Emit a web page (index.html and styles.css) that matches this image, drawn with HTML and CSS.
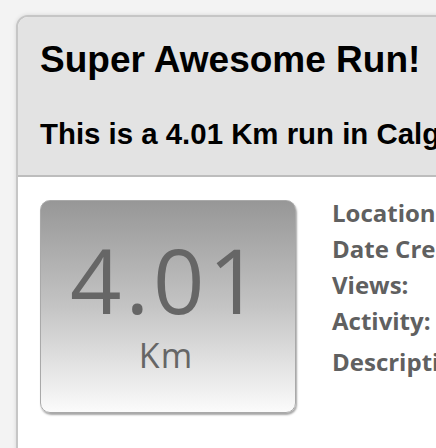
FILE: index.html
```html
<!DOCTYPE html>
<html>
<head>
<meta charset="utf-8">
<link rel="stylesheet" href="styles.css">
</head>
<body>
<div class="card">
  <div class="card-head">
    <h1 class="title">Super Awesome Run!</h1>
    <h2 class="subtitle">This is a 4.01 Km run in Calgary, Alberta</h2>
  </div>
  <div class="card-body">
    <div class="stat">
      <div class="stat-value">4.01</div>
      <div class="stat-unit">Km</div>
    </div>
    <dl class="details">
      <dt class="label">Location:</dt>
      <dt class="label">Date Created:</dt>
      <dt class="label">Views:</dt>
      <dt class="label">Activity:</dt>
      <dt class="label label-desc">Description:</dt>
    </dl>
  </div>
</div>
</body>
</html>
```

FILE: styles.css
```css
html, body {
  margin: 0;
  padding: 0;
  overflow: hidden;
}
body {
  background: #f3f3f3;
  width: 436px;
  height: 448px;
}
.card {
  margin: 15px 0 0 16px;
  width: 640px;
  height: 600px;
  border: 2px solid #c6c6c6;
  border-radius: 12px;
  background: #ffffff;
  box-shadow: 0 0 4px rgba(0, 0, 0, 0.12);
  overflow: hidden;
}
.card-head {
  background: #e3e3e3;
  border-bottom: 2px solid #bdbdbd;
  padding: 21px 22px 23px;
  font-family: "Liberation Sans", Arial, sans-serif;
  color: #000;
  white-space: nowrap;
}
.title {
  margin: 0;
  font-size: 37px;
  line-height: 44px;
  font-weight: bold;
}
.subtitle {
  margin: 34px 0 0;
  font-size: 29.4px;
  line-height: 36px;
  font-weight: bold;
}
.card-body {
  display: flex;
  align-items: flex-start;
  gap: 36px;
  padding: 18px 22px 0;
}
.stat {
  margin-top: 5px;
  box-sizing: border-box;
  width: 256px;
  height: 213px;
  border: 1px solid #a9a9a9;
  border-radius: 10px;
  background: linear-gradient(#979797 0%, #c4c4c4 50%, #fbfbfb 100%);
  box-shadow: 1px 2px 2px rgba(0, 0, 0, 0.35);
  padding-top: 33px;
  text-align: center;
  font-family: "Open Sans", sans-serif;
  color: #666666;
  flex: none;
}
.stat-value {
  font-size: 90px;
  line-height: 90px;
  letter-spacing: 4px;
  padding-left: 0;
  padding-right: 2px;
}
.stat-unit {
  margin-top: 14px;
  font-size: 34px;
  line-height: 34px;
  letter-spacing: 1px;
  padding-right: 4px;
}
.details {
  margin: 0;
  font-family: "Open Sans", sans-serif;
  font-weight: bold;
  font-size: 24px;
  line-height: 36px;
  color: #606060;
  white-space: nowrap;
}
.label {
  margin: 0;
}
.label-desc {
  margin-top: 5px;
}
```
